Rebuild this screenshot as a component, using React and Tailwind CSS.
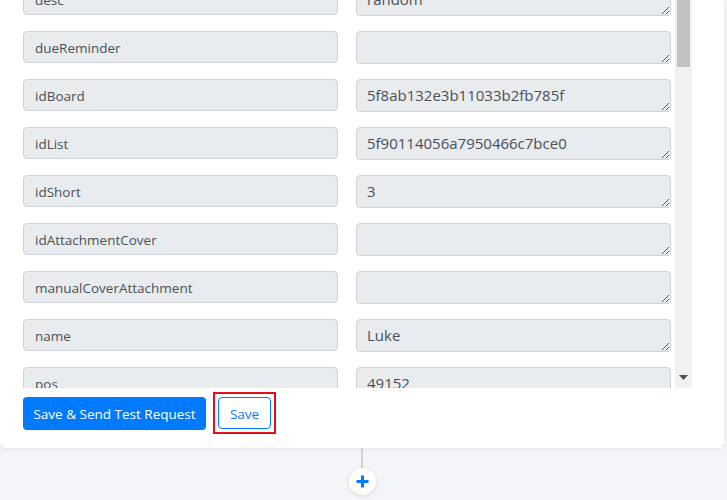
import React from "react";

const rows = [
  ["desc", "random"],
  ["dueReminder", ""],
  ["idBoard", "5f8ab132e3b11033b2fb785f"],
  ["idList", "5f90114056a7950466c7bce0"],
  ["idShort", "3"],
  ["idAttachmentCover", ""],
  ["manualCoverAttachment", ""],
  ["name", "Luke"],
  ["pos", "49152"],
];

export default function App() {
  return (
    <div
      className="w-[727px] h-[500px] bg-[#f3f5f8] overflow-hidden flex flex-col"
      style={{ fontFamily: '"Open Sans", "Noto Sans", sans-serif' }}
    >
      <div className="w-[724px] bg-white rounded-b-[6px] shadow-[0_1px_4px_rgba(0,0,0,0.08)] flex flex-col">
        <div className="flex h-[388px]">
          <div className="w-[675px] h-[388px] overflow-hidden">
            <div className="-mt-[17px] pl-[23px] pr-[4px] flex flex-col">
              {rows.map(([k, v]) => (
                <div key={k} className="flex gap-[18px] h-[48px] items-start">
                  <div className="w-[315px] h-[32px] bg-[#e9ecef] border border-[#ced4da] rounded-[4px] flex items-center pl-[11px] pt-[3px] text-[13.5px] text-[#495057]">
                    {k}
                  </div>
                  <textarea
                    readOnly
                    value={v}
                    rows={1}
                    className="w-[315px] h-[33px] bg-[#e9ecef] border border-[#ced4da] rounded-[4px] px-[10px] pt-[5px] text-[15px] leading-[20px] text-[#495057] resize-y overflow-hidden outline-none"
                    style={{ fontFamily: '"Open Sans", sans-serif' }}
                  />
                </div>
              ))}
            </div>
          </div>
          <div className="w-[17px] h-[388px] bg-[#f1f1f1] flex flex-col items-center justify-between">
            <div className="w-[13px] h-[67px] bg-[#c1c1c1]" />
            <svg width="9" height="5" viewBox="0 0 9 5" className="mb-[8px]">
              <polygon points="0,0 9,0 4.5,5" fill="#505050" />
            </svg>
          </div>
        </div>
        <div className="flex items-center pl-[23px] pt-[4px] pb-[14px]">
          <button className="h-[33px] w-[183px] pt-[2px] bg-[#007bff] text-white rounded-[4px] text-[13.5px] font-medium">
            Save &amp; Send Test Request
          </button>
          <div className="ml-[7px] border-2 border-[#e3101a] p-[3px]">
            <button className="h-[32px] w-[53px] pt-[2px] bg-white border border-[#007bff] text-[#007bff] rounded-[4px] text-[13.5px]">
              Save
            </button>
          </div>
        </div>
      </div>
      <div className="w-[724px] flex flex-col items-center">
        <div className="w-[2px] h-[20px] bg-[#cfd3d9]" />
        <div className="w-[27px] h-[27px] rounded-full bg-white shadow-[0_1px_4px_rgba(0,0,0,0.12)] flex items-center justify-center">
          <svg width="13" height="13" viewBox="0 0 13 13">
            <path d="M6.5 0.5v12M0.5 6.5h12" stroke="#007bff" strokeWidth="3" />
          </svg>
        </div>
      </div>
    </div>
  );
}
